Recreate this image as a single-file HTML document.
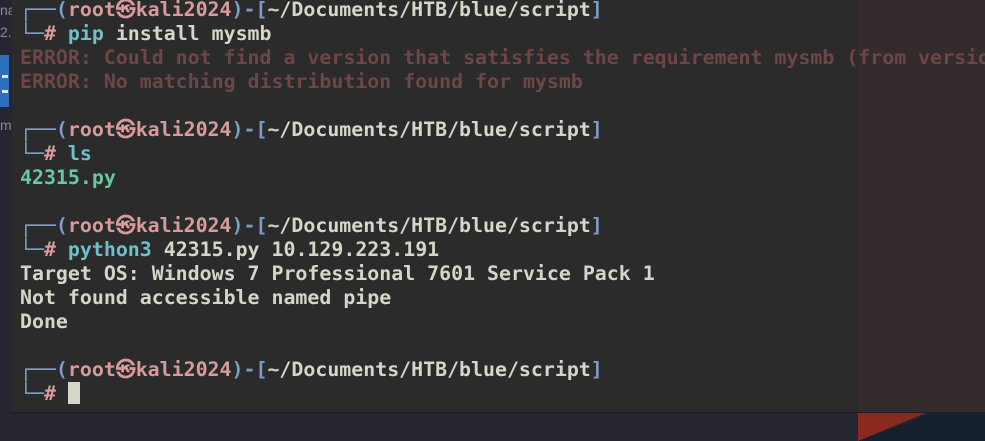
<!DOCTYPE html>
<html><head><meta charset="utf-8"><style>
html,body{margin:0;padding:0;width:985px;height:441px;overflow:hidden;background:#262733;}
#desk{position:absolute;left:0;top:0;width:985px;height:441px;background:#25262f;}
#blue{position:absolute;left:0;top:55px;width:9px;height:52px;background:#2f6fc0;}
#red{position:absolute;left:858px;top:412px;width:70px;height:29px;background:#8a2a1e;clip-path:polygon(0 0,100% 0,0 100%);}
#navy{position:absolute;left:858px;top:412px;width:127px;height:29px;background:#16202e;clip-path:polygon(60% 0,100% 0,100% 100%,0 100%);}
#term{position:absolute;left:12px;top:0;width:973px;height:412px;background:#2b2b2b;border-bottom:1px solid #1c1d24;overflow:hidden;}
#shade{position:absolute;left:846px;top:0;width:127px;height:412px;background:#332b2c;}
pre{position:absolute;left:8px;top:-2px;margin:0;font-family:"DejaVu Sans Mono","Liberation Mono",monospace;font-size:19.9px;font-weight:bold;line-height:24px;color:#d6d6c8;white-space:pre;}
.b{color:#7d9dc7}.p{color:#d89a9a}.c{color:#6fc1c8}.e{color:#6e4646}.g{color:#66c9a0}
.cur{display:inline-block;width:12px;height:22px;background:#d6d6c8;vertical-align:-4px;}
.lbl{position:absolute;left:0;font:14px "Liberation Sans",sans-serif;color:#8a8c98;}
</style></head><body>
<div id="desk"></div><div id="blue"></div><div id="red"></div><div id="navy"></div>
<div class="lbl" style="top:2px">na</div><div class="lbl" style="top:24px">2.</div><div class="lbl" style="top:117px">mb</div>
<div style="position:absolute;left:2px;top:75px;width:6px;height:3px;background:#dfe6f0"></div>
<div style="position:absolute;left:2px;top:90px;width:6px;height:3px;background:#dfe6f0"></div>
<div id="term"><div id="shade"></div>
<pre><span class="b">┌──(</span><span class="p">root㉿kali2024</span><span class="b">)-[</span>~/Documents/HTB/blue/script<span class="b">]</span>
<span class="b">└─</span><span class="p">#</span> <span class="c">pip</span> install mysmb
<span class="e">ERROR: Could not find a version that satisfies the requirement mysmb (from versions: none)</span>
<span class="e">ERROR: No matching distribution found for mysmb</span>

<span class="b">┌──(</span><span class="p">root㉿kali2024</span><span class="b">)-[</span>~/Documents/HTB/blue/script<span class="b">]</span>
<span class="b">└─</span><span class="p">#</span> <span class="c">ls</span>
<span class="g">42315.py</span>

<span class="b">┌──(</span><span class="p">root㉿kali2024</span><span class="b">)-[</span>~/Documents/HTB/blue/script<span class="b">]</span>
<span class="b">└─</span><span class="p">#</span> <span class="c">python3</span> 42315.py 10.129.223.191
Target OS: Windows 7 Professional 7601 Service Pack 1
Not found accessible named pipe
Done

<span class="b">┌──(</span><span class="p">root㉿kali2024</span><span class="b">)-[</span>~/Documents/HTB/blue/script<span class="b">]</span>
<span class="b">└─</span><span class="p">#</span> <span class="cur"></span></pre>
</div>
</body></html>
